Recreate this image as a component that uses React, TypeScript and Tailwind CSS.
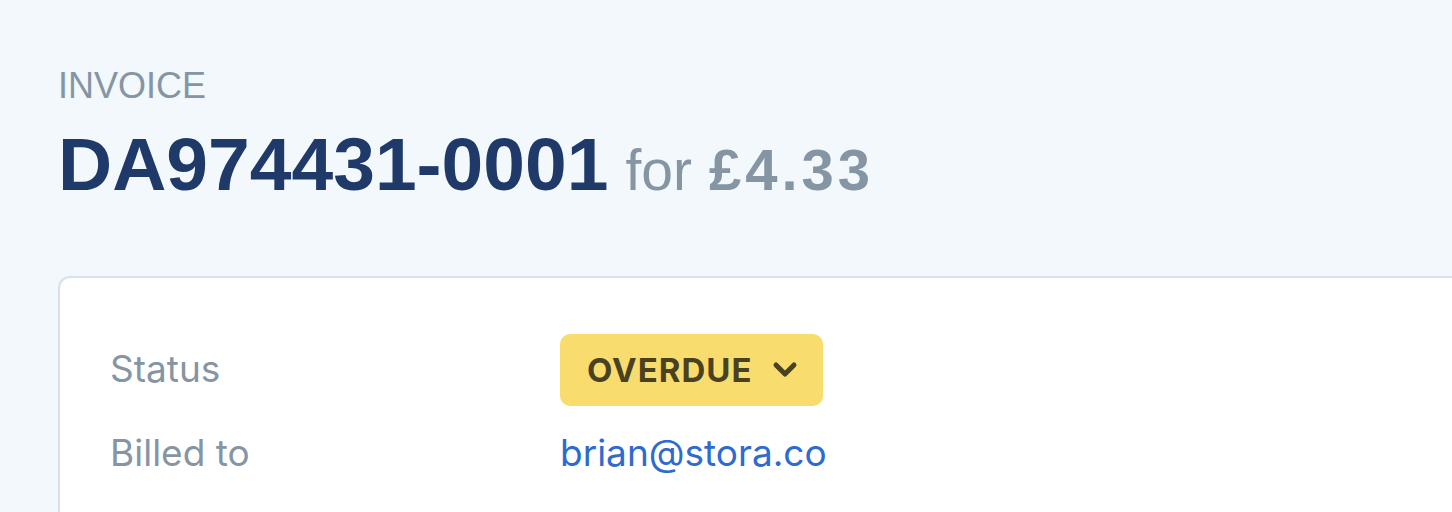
export default function App() {
  return (
    <div className="min-h-[512px] h-[512px] w-full bg-[#f3f8fc] overflow-hidden">
      <div className="pl-[58px] pt-[68px]">
        <div className="text-[36px] leading-none text-[#8595a3] font-['Liberation_Sans',Arial,sans-serif]">
          INVOICE
        </div>
        <div className="mt-[23px] flex items-baseline font-['Liberation_Sans',Arial,sans-serif] leading-none whitespace-nowrap">
          <span className="text-[75px] font-bold text-[#1f3a68]">DA974431-0001</span>
          <span className="ml-[17px] text-[57px] text-[#8595a3]">for</span>
          <span className="ml-[17px] text-[58px] font-bold text-[#8595a3] tracking-[4px]">£4.33</span>
        </div>
        <div className="mt-[74px] h-[400px] rounded-tl-[12px] border-l-2 border-t-2 border-[#d5e2ee] bg-white pl-[50px] pt-[56px] font-['Inter',sans-serif] text-[37px] leading-[52px]">
          <div className="flex items-center h-[72px]">
            <div className="w-[450px] text-[#8595a3] -mt-[3px]">Status</div>
            <div className="flex items-center h-[72px] w-[263px] rounded-[10px] bg-[#f8dd6e] pl-[27px] text-[#4a4121]">
              <span className="font-bold text-[33px] tracking-[1px]">OVERDUE</span>
              <svg className="ml-[19px]" width="26" height="18" viewBox="0 0 26 18" fill="none">
                <path d="M4 4 L13 13 L22 4" stroke="#4a4121" strokeWidth="5" strokeLinecap="round" strokeLinejoin="round" />
              </svg>
            </div>
          </div>
          <div className="flex items-center mt-[21px]">
            <div className="w-[450px] text-[#8595a3]">Billed to</div>
            <div className="text-[#2e6ad0]">brian@stora.co</div>
          </div>
        </div>
      </div>
    </div>
  );
}
